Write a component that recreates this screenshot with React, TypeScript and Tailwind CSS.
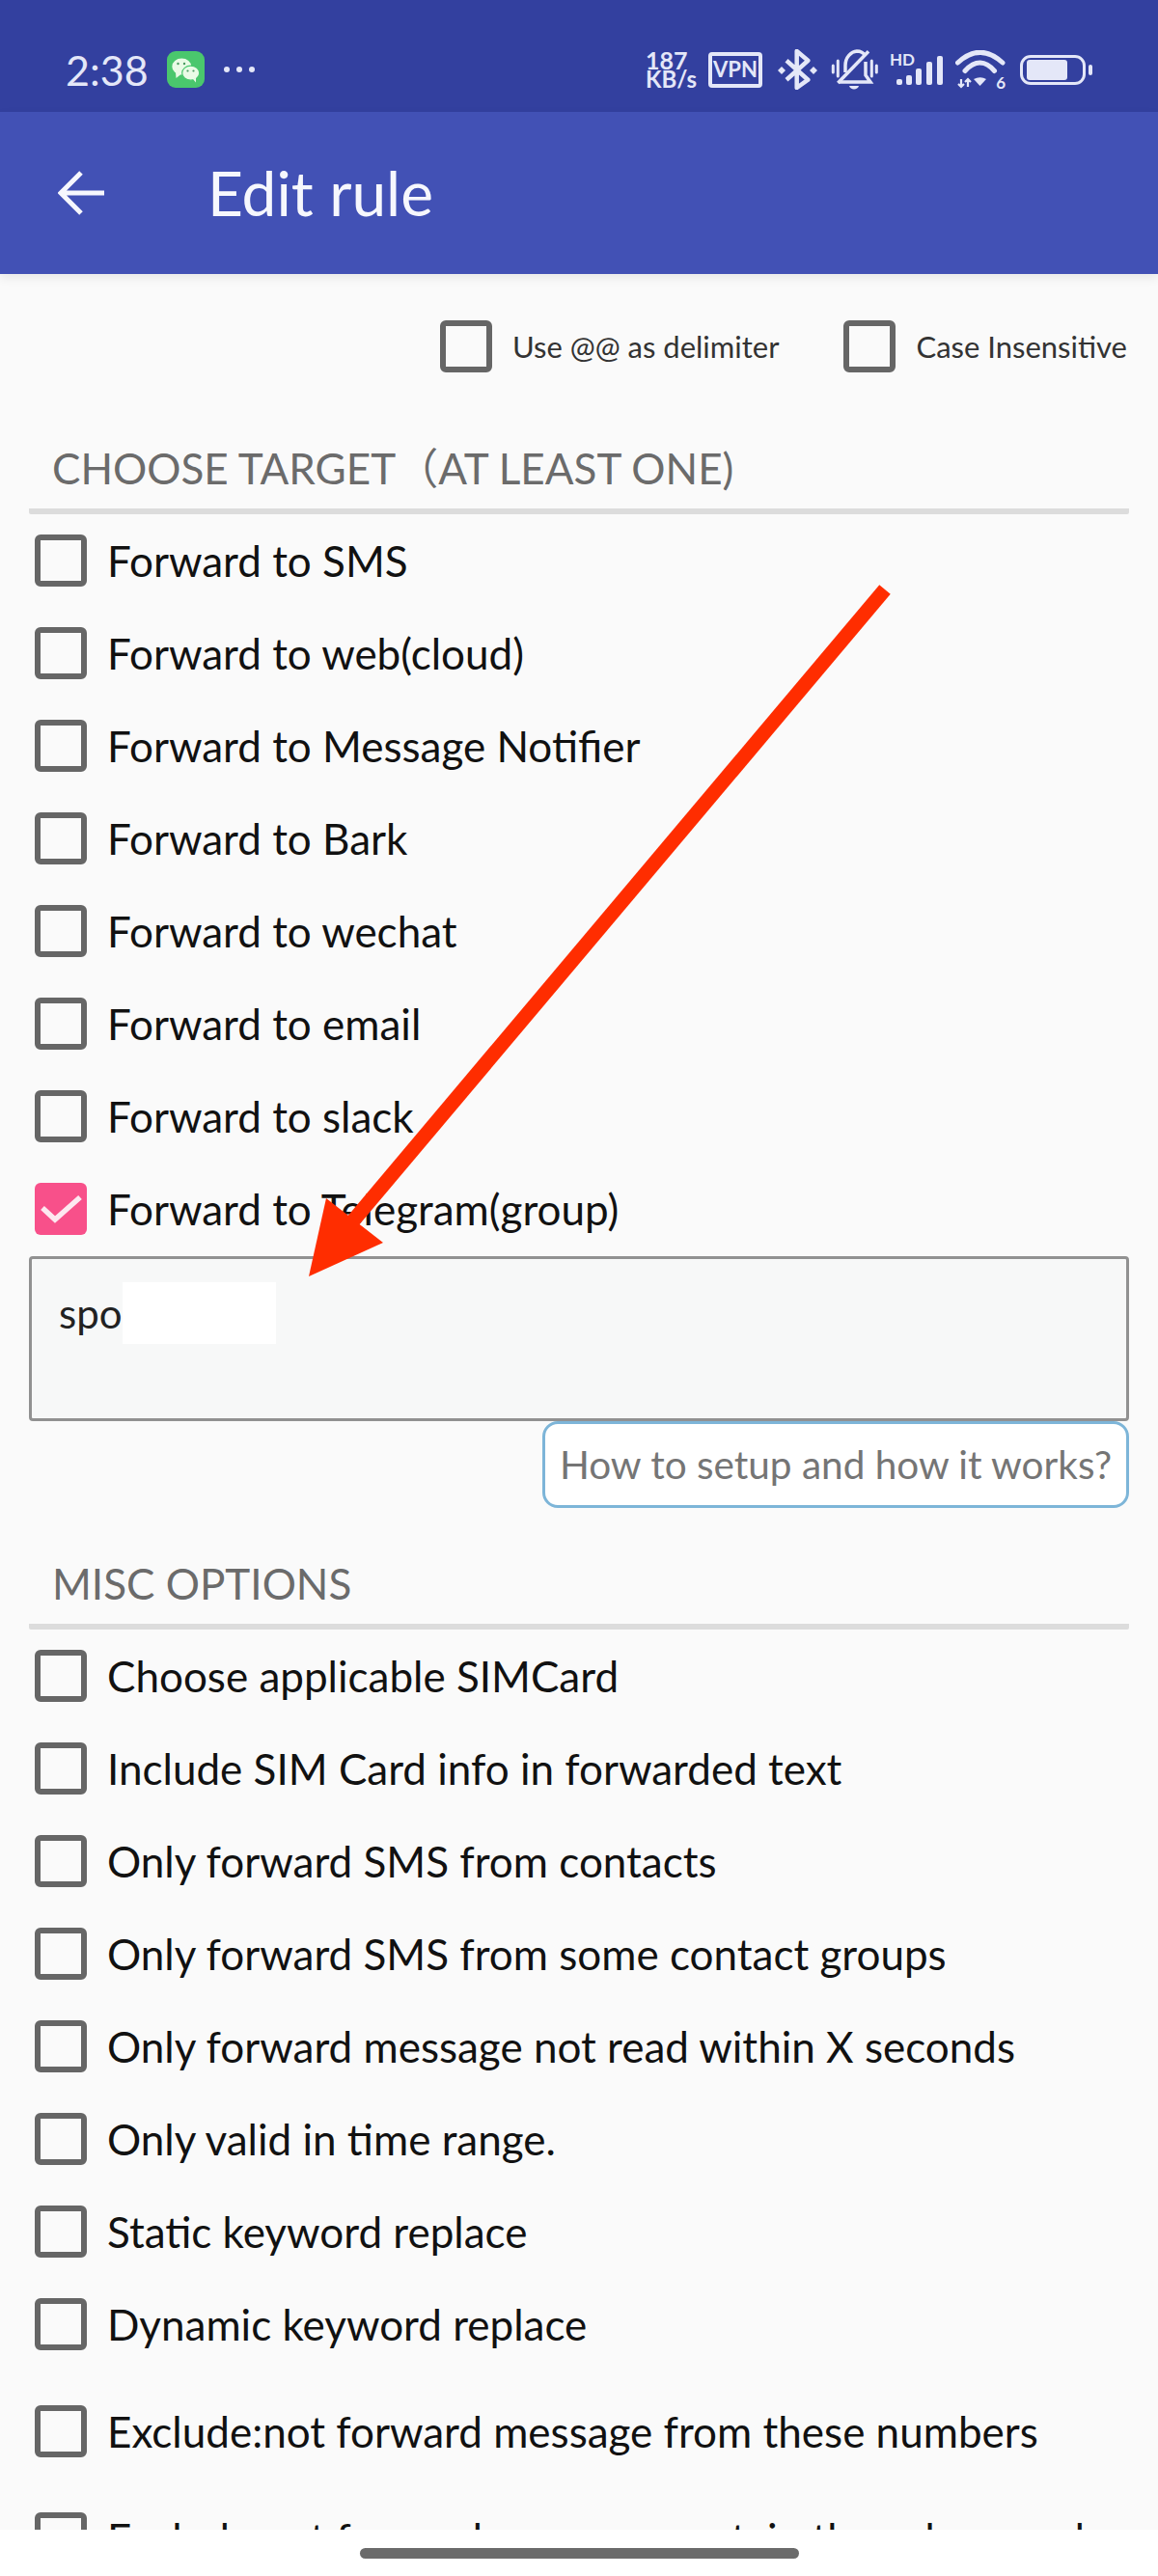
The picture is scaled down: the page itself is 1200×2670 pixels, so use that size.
const targets = [
  'Forward to SMS',
  'Forward to web(cloud)',
  'Forward to Message Notifier',
  'Forward to Bark',
  'Forward to wechat',
  'Forward to email',
  'Forward to slack',
];

const miscOptions = [
  'Choose applicable SIMCard',
  'Include SIM Card info in forwarded text',
  'Only forward SMS from contacts',
  'Only forward SMS from some contact groups',
  'Only forward message not read within X seconds',
  'Only valid in time range.',
  'Static keyword replace',
  'Dynamic keyword replace',
];

function Box({ checked = false }: { checked?: boolean }) {
  if (checked) {
    return (
      <span className="h-[54px] w-[54px] shrink-0 rounded-[6px] bg-[#f8508a]">
        <svg width="54" height="54" viewBox="0 0 54 54" fill="none">
          <path d="M8 26l13 12L47 15" stroke="#fde8f0" strokeWidth="5.5" />
        </svg>
      </span>
    );
  }
  return <span className="h-[54px] w-[54px] shrink-0 rounded-[6px] border-[6px] border-[#666666]" />;
}

function Row({ label, checked }: { label: string; checked?: boolean }) {
  return (
    <div className="flex h-[96px] items-center gap-[21px] pl-[36px]">
      <Box checked={checked} />
      <span className="text-[44px] leading-none whitespace-nowrap text-[#111111]">{label}</span>
    </div>
  );
}

function SectionHeader({ children }: { children: string }) {
  return (
    <div className="mx-[30px] rounded-[2px] border-b-[6px] border-[#dcdcdc] pb-[18px] pl-[24px] text-[44px] leading-[48px] whitespace-nowrap text-[#6b6b6b]">
      {children}
    </div>
  );
}

function StatusIcons() {
  return (
    <div className="flex items-center text-[#e4e7f8]">
      <div className="mr-[12px] w-[53px] text-[25px] leading-[20px] font-bold">
        <div>187</div>
        <div className="text-[24px]">KB/s</div>
      </div>
      <div className="mr-[15px] flex h-[37px] w-[56px] items-center justify-center rounded-[4px] border-[4px] border-[#e4e7f8] text-[22px] leading-none font-bold">
        VPN
      </div>
      {/* bluetooth */}
      <svg className="mr-[12px]" width="43" height="42" viewBox="0 0 43 42" fill="none">
        <path d="M10 11.7L32.3 31.7L20.7 40V2L32.3 11.7L10 31.7" stroke="currentColor" strokeWidth="4.5" strokeLinejoin="round" />
        <path d="M5 18l4 4-4 4-4-4zM38 18l4 4-4 4-4-4z" fill="currentColor" />
      </svg>
      {/* muted bell */}
      <svg className="mr-[12px]" width="50" height="44" viewBox="0 0 50 44" fill="none">
        <path d="M16 25V18C16 9 22 3.5 28 3C32 3 35 5 37 8M37 14V28L42 35H10" stroke="currentColor" strokeWidth="3.5" />
        <path d="M8.3 36L40 3.3" stroke="currentColor" strokeWidth="3.5" />
        <path d="M20 39H30C29 43.5 21 43.5 20 39Z" fill="currentColor" />
        <path d="M3.3 18V25M8.3 13V29M43.3 13V29M48.3 18V25" stroke="currentColor" strokeWidth="3" strokeLinecap="round" />
      </svg>
      {/* HD + signal */}
      <div className="mr-[13px] flex h-[35px] w-[55px] flex-col">
        <span className="h-0 text-[17px] leading-[14px] font-bold">HD</span>
        <svg width="55" height="35" viewBox="0 0 55 35" fill="currentColor">
          <rect x="7" y="27" width="6" height="6" rx="2" />
          <rect x="17" y="23" width="6" height="10" rx="2" />
          <rect x="27" y="16" width="6" height="17" rx="2" />
          <rect x="38" y="9" width="6" height="24" rx="2" />
          <rect x="49" y="3" width="6" height="30" rx="2" />
        </svg>
      </div>
      {/* wifi */}
      <div className="relative mr-[15px] h-[40px] w-[52px]">
        <svg width="52" height="40" viewBox="0 0 52 40" fill="none">
          <path d="M2.5 13Q25.5-8.4 49 13M10 21.5Q25.5 4.7 40.5 21.5" stroke="currentColor" strokeWidth="5" strokeLinecap="round" />
          <path d="M19 30Q25.5 26.5 32 30L25.5 37Z" fill="currentColor" />
          <path d="M6 30V38M3 35L6 38L9 35M13 38V30M10 33L13 30L16 33" stroke="currentColor" strokeWidth="2.2" />
        </svg>
        <span className="absolute right-0 bottom-[-1px] text-[17px] leading-[14px] font-bold">6</span>
      </div>
      {/* battery */}
      <div className="flex items-center">
        <div className="flex h-[31px] w-[68px] items-center rounded-[11px] border-[3px] border-[#e4e7f8] pl-[4px]">
          <div className="h-[21px] w-[42px] rounded-[3px] bg-[#e4e7f8]" />
        </div>
        <div className="ml-[3px] h-[11px] w-[4px] rounded-full bg-[#e4e7f8]" />
      </div>
    </div>
  );
}

export default function App() {
  return (
    <div className='relative flex h-[2670px] w-[1200px] flex-col overflow-hidden bg-white font-["Lato","Noto_Sans_CJK_SC",sans-serif]'>
      <div className="flex h-[116px] shrink-0 items-center justify-between bg-[#33409f] px-[68px] pt-[28px] text-[#e4e7f8]">
        <div className="flex items-center">
          <span className="w-[105px] text-[43px] leading-none">2:38</span>
          <span className="h-[38px] w-[39px] rounded-[9px] bg-[#4ac76d]">
            <svg width="39" height="38" viewBox="0 0 39 38">
              <ellipse cx="15.3" cy="16" rx="10" ry="8.5" fill="#eafbe6" />
              <path d="M9 22l0.5 6 5-4z" fill="#eafbe6" />
              <ellipse cx="24.7" cy="22.7" rx="9" ry="7.5" fill="#eafbe6" stroke="#4ac76d" strokeWidth="1.2" />
              <path d="M27 29l3 3.5 0-5z" fill="#eafbe6" />
              <circle cx="11.5" cy="13" r="1.2" fill="#4a9a60" />
              <circle cx="18" cy="13" r="1.2" fill="#4a9a60" />
              <circle cx="21.5" cy="20.5" r="1.1" fill="#4a9a60" />
              <circle cx="27.5" cy="20.5" r="1.1" fill="#4a9a60" />
            </svg>
          </span>
          <span className="ml-[20px] flex gap-[7px]">
            <span className="h-[6px] w-[6px] rounded-full bg-[#e4e7f8]" />
            <span className="h-[6px] w-[6px] rounded-full bg-[#e4e7f8]" />
            <span className="h-[6px] w-[6px] rounded-full bg-[#e4e7f8]" />
          </span>
        </div>
        <StatusIcons />
      </div>

      <div className="z-10 flex h-[168px] shrink-0 items-center bg-[#4251b5] shadow-[0_4px_10px_rgba(0,0,0,0.08)]">
        <svg className="ml-[60px]" width="48" height="46" viewBox="0 0 48 46" fill="none">
          <path d="M24 2L3 23l21 21M3 23h45" stroke="#f6f7fd" strokeWidth="5" />
        </svg>
        <span className="ml-[107px] text-[64px] leading-none text-[#f6f7fd]">Edit rule</span>
      </div>

      <div className="min-h-0 flex-1 overflow-hidden bg-[#fafafa]">
        <div className="flex h-[150px] items-center justify-end pr-[32px] text-[31px] text-[#333333]">
          <div className="flex items-center gap-[21px]">
            <Box />
            <span>Use @@ as delimiter</span>
          </div>
          <div className="ml-[67px] flex items-center gap-[21px]">
            <Box />
            <span>Case Insensitive</span>
          </div>
        </div>

        <div className="mt-[27px]">
          <SectionHeader>CHOOSE TARGET（AT LEAST ONE)</SectionHeader>
        </div>
        {targets.map((t) => (
          <Row key={t} label={t} />
        ))}
        <Row label="Forward to Telegram(group)" checked />

        <div className="mx-[30px] mt-[1px] flex h-[171px] rounded-[4px] border-[3px] border-[#919191] bg-[#f7f8f8] pt-[24px] pl-[28px]">
          <span className="text-[42px] leading-[64px] text-[#222222]">spo</span>
          <span className="h-[64px] w-[159px] bg-white" />
        </div>
        <div className="mx-[30px] flex justify-end">
          <div className="flex h-[90px] w-[608px] items-center justify-center rounded-[16px] border-[3px] border-[#7db5d8] bg-white text-[40.5px] whitespace-nowrap text-[#757575]">
            How to setup and how it works?
          </div>
        </div>

        <div className="mt-[54px]">
          <SectionHeader>MISC OPTIONS</SectionHeader>
        </div>
        {miscOptions.map((t) => (
          <Row key={t} label={t} />
        ))}
        <div className="mt-[15px]">
          <Row label="Exclude:not forward message from these numbers" />
        </div>
        <div className="mt-[15px]">
          <Row label="Exclude:not forward message contain these keywords" />
        </div>
      </div>

      <div className="flex h-[48px] shrink-0 items-start justify-center bg-white pt-[19px]">
        <div className="h-[11px] w-[455px] rounded-full bg-[#6b6b6b]" />
      </div>

      {/* red annotation arrow */}
      <svg className="pointer-events-none absolute top-0 left-0" width="1200" height="2670" viewBox="0 0 1200 2670">
        <path d="M917 611L362 1270" stroke="#ff2d00" strokeWidth="15" fill="none" />
        <path d="M320 1323L338 1242L397 1288Z" fill="#ff2d00" />
      </svg>
    </div>
  );
}
